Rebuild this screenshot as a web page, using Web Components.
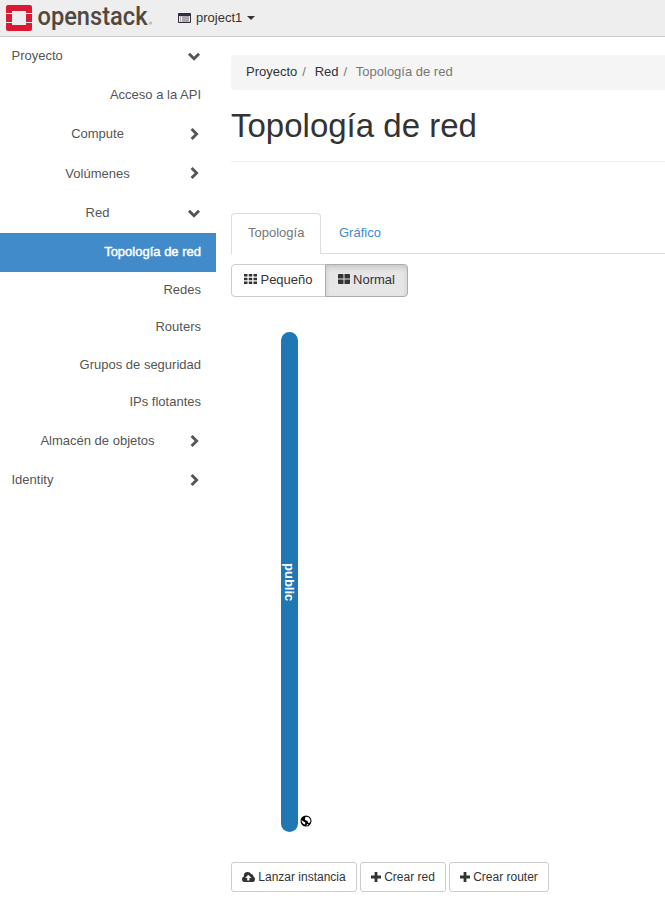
<!DOCTYPE html>
<html lang="es"><head><meta charset="utf-8"><title>Topología de red</title>
<style>
body{margin:0;background:#fff;font:13px/18.57px "Liberation Sans",Arial,sans-serif;color:#333;overflow:hidden}
</style></head><body>
<os-app></os-app>
<script>
const icons={
 down:['0 0 14 14','<path d="M2 4.8l5 5 5-5" fill="none" stroke="currentColor" stroke-width="2.9"/>'],
 right:['0 0 14 14','<path d="M4.6 2l5 5-5 5" fill="none" stroke="currentColor" stroke-width="2.9"/>'],
 list:['0 0 13 10','<path fill-rule="evenodd" d="M.8 0h11.4q.8 0 .8.8v8.4q0 .8-.8.8H.8q-.8 0-.8-.8V.8Q0 0 .8 0zM1 3v6h11V3z"/><path opacity=".7" d="M2 3.6h1v1H2zM4 3.6h7v1H4zM2 5.5h1v1H2zM4 5.5h7v1H4zM2 7.4h1v1H2zM4 7.4h7v1H4z"/>'],
 caret:['0 0 8 4','<path d="M0 0h8L4 4z"/>'],
 grid3:['0 0 13 10','<path d="M0 0h3.5v2.5H0zM4.750 0h3.5v2.5h-3.5zM9.5 0H13v2.5H9.5zM0 3.750h3.5v2.5H0zM4.750 3.750h3.5v2.5h-3.5zM9.5 3.750H13v2.5H9.5zM0 7.5h3.5V10H0zM4.750 7.5h3.5V10h-3.5zM9.5 7.5H13V10H9.5z"/>'],
 grid2:['0 0 12 10','<path d="M.7 0h4q.8 0 .8.8v3.7H0V.8Q0 0 .7 0zM6.5 0h4.7q.8 0 .8.8v3.7H6.5zM0 5.5h5.5V10H.7Q0 10 0 9.3zM6.5 5.5H12v3.8q0 .7-.8.7H6.5z"/>'],
 plus:['0 0 10 10','<path d="M3.6 0h2.8v3.6H10v2.8H6.4V10H3.6V6.4H0V3.6h3.6z"/>'],
 cloud:['0 0 13 10','<path fill-rule="evenodd" d="M3 10Q0 10 0 7.2 0 5.2 1.8 4.4 1.6 0 5.7 0 8.3 0 9.3 2.3 11.5 2 11.4 4.5 13 5.2 13 7.2 13 10 10.1 10zM6.2 2.8L3.2 6h2v2.6h2.2V6h2z"/>'],
 globe:['0 0 12 12','<circle cx="6" cy="6" r="5.5" fill="#000"/><path fill="#fff" d="M5.6 1.8l3 .4 1.6 2 .2 2.2-1.3 1.8-1.2-.6L7.4 5.8 5.7 5.6 4.8 4zM1.5 5l2.1 1.6 1.7.9-.2 2-1.7-.6-1.5-1.8zM6 10.3l1.5-1.2 1 .4-1.1.9z"/>']
};
function define(name,css,html){
 customElements.define(name,class extends HTMLElement{
  constructor(){super();this.attachShadow({mode:'open'}).innerHTML=`<style>${css}</style>`+(typeof html==='function'?html(this):html);}
 });
}
define('os-icon',':host{display:inline-block;flex:none;line-height:0}svg{display:block;width:100%;height:100%;fill:currentColor}',el=>{
 const i=icons[el.getAttribute('name')];return `<svg viewBox="${i[0]}">${i[1]}</svg>`;});
define('os-logo',':host{display:block;width:150px;height:34px}svg{display:block;overflow:visible}',`
<svg width="150" height="34">
<path fill="#da1a32" d="M3 5h22q2 0 2 2v6h-6v-2H7v2H1V7q0-2 2-2zM1 14h6v8H1zM21 14h6v8h-6zM1 23h6v2h14v-2h6v6q0 2-2 2H3q-2 0-2-2z"/>
<text x="32.5" y="24.7" textLength="110" lengthAdjust="spacingAndGlyphs" font-family="Roboto" font-weight="500" font-size="25" fill="#51483f">openstack</text><circle cx="145.5" cy="23.2" r="1" fill="none" stroke="#888" stroke-width=".7"/></svg>`);
define('os-topbar',`:host{display:flex;box-sizing:border-box;height:37px;background:#eee;border-bottom:1px solid #c8c8c8;padding-left:5px}
.p{display:flex;align-items:center;height:35px;margin-left:23px}.l{width:13px;height:10px;margin-right:5px;color:#342c3b}.c{width:8px;height:4px;margin-left:5px}.p span{padding-top:1px}`,
`<os-logo></os-logo><div class="p"><os-icon class="l" name="list"></os-icon><span>project1</span><os-icon class="c" name="caret"></os-icon></div>`);
define('nav-row',`:host{display:grid;grid-template-columns:187px 14px;align-items:center;box-sizing:border-box;height:39.2px;color:#555;padding-bottom:.6px}
:host([leaf]){grid-template-columns:201px;text-align:right}:host([small]){height:37.5px;padding-bottom:1.2px}:host([active]){background:#428bca;color:#fff;-webkit-text-stroke:.45px #fff;height:39px}
:host([group]) span{text-align:center;padding-left:8px}:host([top]) span{padding-left:11.5px}os-icon{width:14px;height:14px;margin-bottom:1px}`,
el=>`<span><slot></slot></span>${el.hasAttribute('leaf')?'':`<os-icon name="${el.hasAttribute('open')?'down':'right'}"></os-icon>`}`);
define('os-sidebar',':host{display:block;width:216px}',`
<nav-row top open>Proyecto</nav-row><nav-row leaf>Acceso a la API</nav-row><nav-row group>Compute</nav-row><nav-row group>Volúmenes</nav-row><nav-row group open>Red</nav-row>
<nav-row leaf active>Topología de red</nav-row><nav-row leaf small>Redes</nav-row><nav-row leaf small>Routers</nav-row><nav-row leaf small>Grupos de seguridad</nav-row><nav-row leaf small>IPs flotantes</nav-row>
<nav-row group>Almacén de objetos</nav-row><nav-row top>Identity</nav-row>`);
define('os-breadcrumb',`:host{display:flex;align-items:center;box-sizing:border-box;height:35px;background:#f5f5f5;border-radius:4px 0 0 4px;padding:0 15px;color:#333}
i{font-style:normal;color:#777;margin:0 8.7px 0 5px}.n{color:#777}`,`<span>Proyecto</span><i>/</i><span>Red</span><i>/</i><span class="n">Topología de red</span>`);
define('os-tabs',`:host{display:flex;box-sizing:border-box;height:41px;border-bottom:1px solid #ddd}
span{box-sizing:border-box;height:41px;padding:11px 18px 0;color:#428bca}.a{width:90px;padding:10px 0 0 16px;border:1px solid #ddd;border-bottom:0;background:#fff;border-radius:4px 4px 0 0;color:#777}`,
`<span class="a">Topología</span><span>Gráfico</span>`);
define('os-button',`:host{display:flex;align-items:center;justify-content:center;gap:3px;box-sizing:border-box;height:33px;border:1px solid #ccc;border-radius:4px;white-space:nowrap;background:#fff;color:#333}
:host([sm]){height:30px;font-size:12px;border-radius:3px}:host([first]){border-radius:4px 0 0 4px}:host([on]){background:#e6e6e6;border-color:#adadad;border-radius:0 4px 4px 0;box-shadow:inset 0 3px 5px rgba(0,0,0,.125);margin-left:-1px}
os-icon{width:var(--iw,10px);height:10px}:host(:not([sm])) os-icon{margin-bottom:3px}`,el=>`<os-icon name="${el.getAttribute('icon')}"></os-icon><span><slot></slot></span>`);
define('os-network',`:host{display:flex;align-items:flex-end;height:500px;margin:35px 0 0 50px}
.b{display:flex;align-items:center;justify-content:center;width:17px;height:500px;border-radius:8.5px;background:#1f77b4;color:#fff;font-weight:bold;font-size:13px}
.b span{writing-mode:vertical-rl;line-height:17px}os-icon{width:12px;height:12px;margin:0 0 5px 1.7px}`,`<div class="b"><span>public</span></div><os-icon name="globe"></os-icon>`);
define('os-main',`:host{display:block;box-sizing:border-box;padding:18px 0 0 15px;flex:1}
h1{font-size:33px;font-weight:400;line-height:37px;margin:17px 0 0;padding-bottom:17px;border-bottom:1px solid #eee}
os-tabs{margin-top:51px}.g{display:flex;margin-top:10px}.f{display:flex;gap:3px;margin-top:30px}`,`
<os-breadcrumb></os-breadcrumb><h1>Topología de red</h1><os-tabs></os-tabs>
<div class="g"><os-button first icon="grid3" style="width:95px;--iw:13px">Pequeño</os-button><os-button on icon="grid2" style="width:83px;--iw:12px">Normal</os-button></div>
<os-network></os-network>
<div class="f"><os-button sm icon="cloud" style="width:126px;--iw:13px">Lanzar instancia</os-button><os-button sm icon="plus" style="width:86px">Crear red</os-button><os-button sm icon="plus" style="width:100px">Crear router</os-button></div>`);
define('os-app',':host{display:block;height:907px}.m{display:flex}',`<os-topbar></os-topbar><div class="m"><os-sidebar></os-sidebar><os-main></os-main></div>`);
</script></body></html>
